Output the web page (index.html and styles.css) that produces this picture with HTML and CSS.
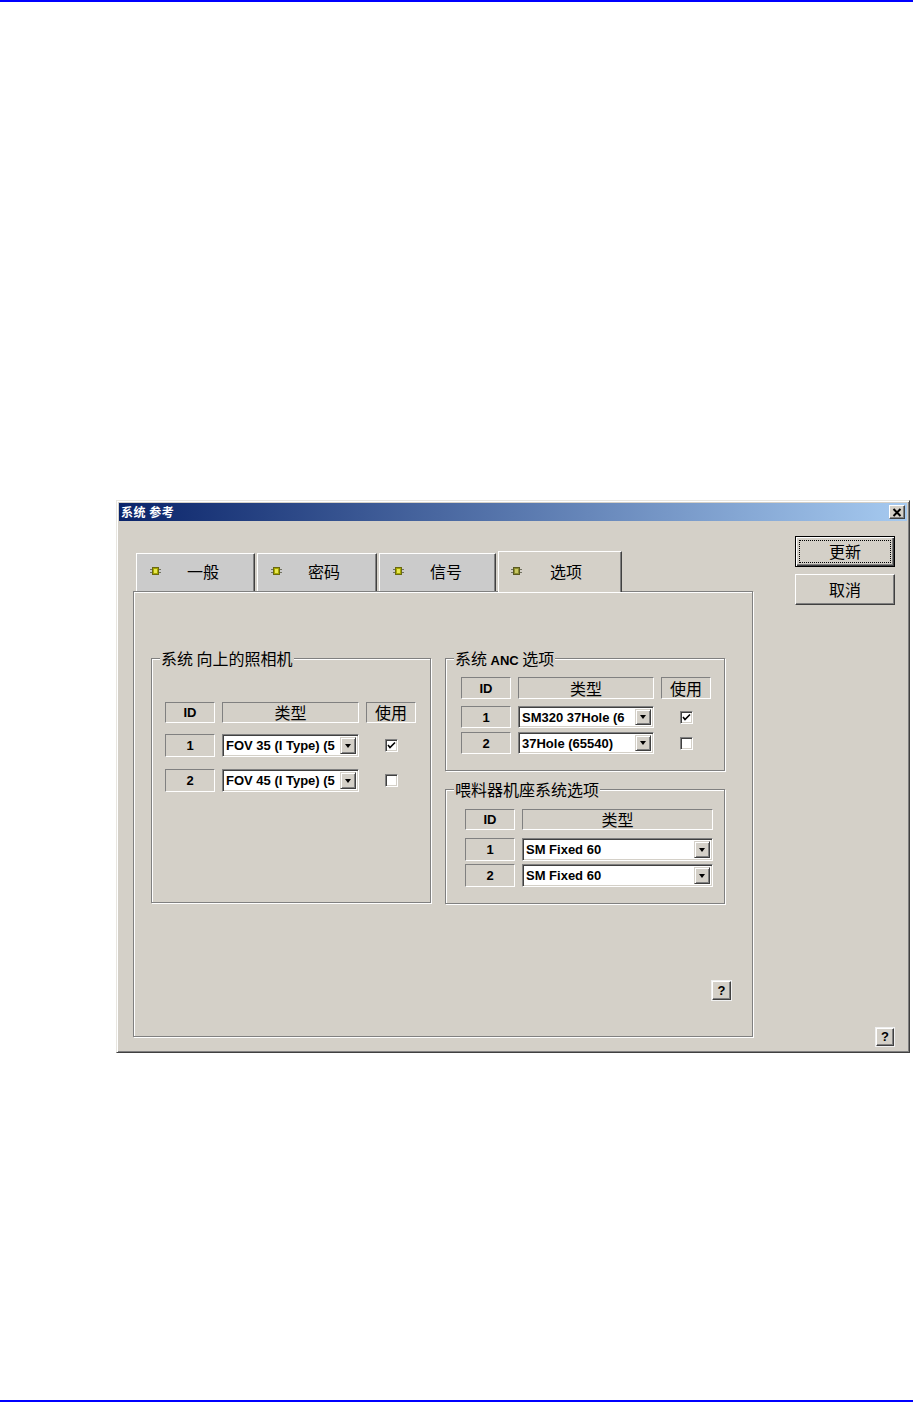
FILE: index.html
```html
<!DOCTYPE html>
<html lang="zh-CN">
<head>
<meta charset="utf-8">
<title>系统 参考</title>
<link rel="stylesheet" href="styles.css">
</head>
<body>
<div class="page">
  <div class="rule"></div>
  <div class="dialog">
    <div class="titlebar">
      <span class="title">系统 参考</span>
      <span class="close"><svg width="10" height="9" viewBox="0 0 10 9"><path d="M1.5 1 L8.5 8 M8.5 1 L1.5 8" stroke="#000" stroke-width="2" fill="none"/></svg></span>
    </div>
    <div class="dlg-body">
      <div class="main">
        <div class="tabs">
          <div class="tab t1"><svg class="chip" width="11" height="10" viewBox="0 0 11 10"><path d="M0 3.5h11M0 6.5h11" stroke="#707060" stroke-width="1.2"/><rect x="2.5" y="1.5" width="6" height="7" fill="#a8a800" stroke="#6a6a10"/><rect x="4" y="3" width="3" height="4" fill="#e8e850"/></svg><span class="tab-label">一般</span></div>
          <div class="tab t2"><svg class="chip" width="11" height="10" viewBox="0 0 11 10"><path d="M0 3.5h11M0 6.5h11" stroke="#707060" stroke-width="1.2"/><rect x="2.5" y="1.5" width="6" height="7" fill="#a8a800" stroke="#6a6a10"/><rect x="4" y="3" width="3" height="4" fill="#e8e850"/></svg><span class="tab-label">密码</span></div>
          <div class="tab t3"><svg class="chip" width="11" height="10" viewBox="0 0 11 10"><path d="M0 3.5h11M0 6.5h11" stroke="#707060" stroke-width="1.2"/><rect x="2.5" y="1.5" width="6" height="7" fill="#a8a800" stroke="#6a6a10"/><rect x="4" y="3" width="3" height="4" fill="#e8e850"/></svg><span class="tab-label">信号</span></div>
          <div class="tab t4 active"><svg class="chip" width="11" height="10" viewBox="0 0 11 10"><path d="M0 3.5h11M0 6.5h11" stroke="#707060" stroke-width="1.2"/><rect x="2.5" y="1.5" width="6" height="7" fill="#8c8c30" stroke="#5a5a20"/><rect x="4" y="3" width="3" height="4" fill="#c8c860"/></svg><span class="tab-label">选项</span></div>
        </div>
        <div class="panel">
          <div class="groups">
            <fieldset class="group g-cam">
              <legend>系统 向上的照相机</legend>
              <div class="tbl t-cam">
                <div class="row head">
                  <div class="cell id">ID</div>
                  <div class="cell type">类型</div>
                  <div class="cell use">使用</div>
                </div>
                <div class="row">
                  <div class="cell id">1</div>
                  <div class="combo type"><span class="val">FOV 35 (I Type) (5</span><span class="drop"><span class="arrow"></span></span></div>
                  <div class="chkcell use"><span class="chk"><svg width="9" height="9" viewBox="0 0 9 9"><path d="M1 4 L3 6.5 L8 1.5" stroke="#000" stroke-width="1.6" fill="none"/></svg></span></div>
                </div>
                <div class="row">
                  <div class="cell id">2</div>
                  <div class="combo type"><span class="val">FOV 45 (I Type) (5</span><span class="drop"><span class="arrow"></span></span></div>
                  <div class="chkcell use"><span class="chk"></span></div>
                </div>
              </div>
            </fieldset>
            <div class="col">
              <fieldset class="group g-anc">
                <legend>系统 <b>ANC</b> 选项</legend>
                <div class="tbl t-anc">
                  <div class="row head">
                    <div class="cell id">ID</div>
                    <div class="cell type">类型</div>
                    <div class="cell use">使用</div>
                  </div>
                  <div class="row">
                    <div class="cell id">1</div>
                    <div class="combo type"><span class="val">SM320 37Hole (6</span><span class="drop"><span class="arrow"></span></span></div>
                    <div class="chkcell use"><span class="chk"><svg width="9" height="9" viewBox="0 0 9 9"><path d="M1 4 L3 6.5 L8 1.5" stroke="#000" stroke-width="1.6" fill="none"/></svg></span></div>
                  </div>
                  <div class="row">
                    <div class="cell id">2</div>
                    <div class="combo type"><span class="val">37Hole (65540)</span><span class="drop"><span class="arrow"></span></span></div>
                    <div class="chkcell use"><span class="chk"></span></div>
                  </div>
                </div>
              </fieldset>
              <fieldset class="group g-feed">
                <legend>喂料器机座系统选项</legend>
                <div class="tbl t-feed">
                  <div class="row head">
                    <div class="cell id">ID</div>
                    <div class="cell type">类型</div>
                  </div>
                  <div class="row">
                    <div class="cell id">1</div>
                    <div class="combo type"><span class="val">SM Fixed 60</span><span class="drop"><span class="arrow"></span></span></div>
                  </div>
                  <div class="row">
                    <div class="cell id">2</div>
                    <div class="combo type"><span class="val">SM Fixed 60</span><span class="drop"><span class="arrow"></span></span></div>
                  </div>
                </div>
              </fieldset>
            </div>
          </div>
          <button class="help panel-help">?</button>
        </div>
      </div>
      <div class="side">
        <button class="btn default"><span class="focus">更新</span></button>
        <button class="btn">取消</button>
        <button class="help side-help">?</button>
      </div>
    </div>
  </div>
  <div class="rule bottom"></div>
</div>
</body>
</html>
```

FILE: styles.css
```css
html, body {
  margin: 0;
  padding: 0;
  background: #ffffff;
}

.page {
  width: 913px;
  height: 1402px;
  display: flex;
  flex-direction: column;
  font-family: "Noto Sans CJK SC", "Liberation Sans", sans-serif;
  color: #000;
}

.rule {
  height: 2px;
  background: #0000ff;
  flex: none;
}

.rule.bottom {
  margin-top: auto;
}

.dialog {
  box-sizing: border-box;
  width: 794px;
  height: 553px;
  margin: 498px 0 0 116px;
  background: #d4d0c8;
  border: 1px solid;
  border-color: #e8e6e0 #404040 #404040 #e8e6e0;
  box-shadow: inset 1px 1px #ffffff, inset -1px -1px #808080;
  padding: 2px;
  display: flex;
  flex-direction: column;
}

.titlebar {
  height: 18px;
  flex: none;
  background: linear-gradient(to right, #0a246a, #a6caf0);
  display: flex;
  align-items: center;
  justify-content: space-between;
  padding: 0 2px 0 2px;
}

.title {
  color: #ffffff;
  font-weight: bold;
  font-size: 12px;
  line-height: 14px;
  letter-spacing: 0.5px;
}

.close {
  box-sizing: border-box;
  width: 16px;
  height: 14px;
  background: #d4d0c8;
  border: 1px solid;
  border-color: #ffffff #404040 #404040 #ffffff;
  box-shadow: inset -1px -1px #808080;
  display: flex;
  align-items: center;
  justify-content: center;
}

.dlg-body {
  flex: 1;
  display: flex;
}

.main {
  width: 634px;
  flex: none;
  padding: 30px 0 0 14px;
  box-sizing: border-box;
  display: flex;
  flex-direction: column;
}

/* Tabs */
.tabs {
  height: 40px;
  display: flex;
  align-items: flex-end;
  gap: 2px;
  padding-left: 3px;
}

.tab {
  box-sizing: border-box;
  height: 38px;
  background: #cbcbcb;
  border-top: 1px solid #ffffff;
  border-left: 1px solid #ffffff;
  border-right: 1px solid #404040;
  box-shadow: inset -1px 0 #808080;
  display: flex;
  align-items: center;
  padding-left: 13px;
  padding-bottom: 3px;
  font-size: 16px;
}

.t1 { width: 119px; }
.t2 { width: 120px; }
.t3 { width: 117px; }
.t4 { width: 124px; }

.tab.active {
  height: 41px;
  margin-bottom: -1px;
  background: #d4d0c8;
  position: relative;
  z-index: 2;
  padding-left: 12px;
  padding-bottom: 2px;
}

.chip {
  flex: none;
}

.tab-label {
  margin-left: 26px;
  line-height: 17px;
}

.tab.active .tab-label {
  margin-left: 28px;
}

/* Panel */
.panel {
  box-sizing: border-box;
  width: 620px;
  height: 446px;
  border: 1px solid #808080;
  box-shadow: inset 1px 1px #ffffff, 1px 1px #ffffff;
  padding: 58px 0 0 17px;
  display: flex;
  flex-direction: column;
}

.groups {
  display: flex;
  gap: 14px;
}

.col {
  display: flex;
  flex-direction: column;
}

.group {
  box-sizing: border-box;
  width: 280px;
  margin: 0;
  padding: 0 0 0 8px;
  min-width: 0;
  border: 1px solid #808080;
  box-shadow: inset 1px 1px #ffffff, 1px 1px #ffffff;
}

.group legend {
  font-size: 16px;
  line-height: 16px;
  height: 16px;
  padding: 0 1px;
  margin-left: 0;
  background: #d4d0c8;
}

.group legend b {
  font-family: "Liberation Sans", sans-serif;
  font-weight: bold;
  font-size: 13px;
  line-height: 0;
}

.g-cam { height: 253px; }
.g-anc { height: 121px; }
.g-feed { height: 123px; margin-top: 10px; }

/* Tables */
.tbl {
  display: flex;
  flex-direction: column;
}

.row {
  display: flex;
  gap: 7px;
  align-items: stretch;
}

.cell {
  box-sizing: border-box;
  border: 1px solid;
  border-color: #808080 #ffffff #ffffff #808080;
  display: flex;
  align-items: center;
  justify-content: center;
}

.cell.id {
  width: 50px;
  font-family: "Liberation Sans", sans-serif;
  font-weight: bold;
  font-size: 13px;
}

.head .cell.type,
.head .cell.use {
  font-size: 16px;
  line-height: 17px;
}

.use { width: 50px; }

.t-cam { margin: 36px 0 0 5px; gap: 11px; }
.t-cam .row { height: 23px; }
.t-cam .row.head { height: 21px; }
.t-cam .type { width: 137px; }
.t-cam .row:last-child { margin-top: 1px; }

.t-anc { margin: 11px 0 0 7px; gap: 4px; }
.t-anc .row { height: 22px; }
.t-anc .row.head { margin-bottom: 3px; }
.t-anc .type { width: 136px; }

.t-feed { margin: 12px 0 0 11px; gap: 3px; }
.t-feed .row { height: 23px; }
.t-feed .row.head { height: 21px; margin-bottom: 5px; }
.t-feed .type { width: 191px; }

/* Combo box */
.combo {
  box-sizing: border-box;
  background: #ffffff;
  border: 1px solid;
  border-color: #808080 #ffffff #ffffff #808080;
  box-shadow: inset 1px 1px #404040, inset -1px -1px #d4d0c8;
  padding: 2px 2px 2px 2px;
  display: flex;
  align-items: center;
  overflow: hidden;
}

.combo .val {
  flex: 1;
  min-width: 0;
  overflow: hidden;
  white-space: nowrap;
  font-family: "Liberation Sans", sans-serif;
  font-weight: bold;
  font-size: 13px;
  line-height: 15px;
  padding-left: 1px;
}

.drop {
  box-sizing: border-box;
  width: 16px;
  align-self: stretch;
  flex: none;
  background: #d4d0c8;
  border: 1px solid;
  border-color: #d4d0c8 #404040 #404040 #d4d0c8;
  box-shadow: inset 1px 1px #ffffff, inset -1px -1px #808080;
  display: flex;
  align-items: center;
  justify-content: center;
}

.arrow {
  width: 0;
  height: 0;
  border-left: 3.5px solid transparent;
  border-right: 3.5px solid transparent;
  border-top: 4px solid #000;
}

/* Checkbox */
.chkcell {
  display: flex;
  align-items: center;
  justify-content: center;
}

.chk {
  box-sizing: border-box;
  width: 13px;
  height: 13px;
  background: #ffffff;
  border: 1px solid;
  border-color: #808080 #ffffff #ffffff #808080;
  box-shadow: inset 1px 1px #404040, inset -1px -1px #d4d0c8;
  display: flex;
  align-items: center;
  justify-content: center;
}

/* Buttons */
.help {
  box-sizing: border-box;
  padding: 0;
  background: #d4d0c8;
  border: 1px solid;
  border-color: #ffffff #404040 #404040 #ffffff;
  box-shadow: inset -1px -1px #808080, 0 0 0 1px #f0f0f0;
  font-family: "Liberation Sans", sans-serif;
  font-weight: bold;
  font-size: 13px;
  line-height: 14px;
  color: #000;
  display: flex;
  align-items: center;
  justify-content: center;
}

.panel-help {
  width: 19px;
  height: 19px;
  margin-top: auto;
  align-self: flex-end;
  margin-right: 21px;
  margin-bottom: 36px;
}

.side {
  flex: 1;
  margin-left: 42px;
  padding-top: 15px;
  display: flex;
  flex-direction: column;
}

.btn {
  box-sizing: border-box;
  width: 100px;
  height: 31px;
  padding: 0 0 2px 0;
  background: #d4d0c8;
  border: 1px solid;
  border-color: #ffffff #404040 #404040 #ffffff;
  box-shadow: inset -1px -1px #808080;
  font-family: "Noto Sans CJK SC", sans-serif;
  font-size: 16px;
  color: #000;
  display: flex;
  align-items: center;
  justify-content: center;
}

.btn + .btn {
  margin-top: 7px;
}

.btn.default {
  border-color: #000000;
  box-shadow: inset 1px 1px #ffffff, inset -1px -1px #404040, inset -2px -2px #808080;
  padding: 3px;
}

.btn .focus {
  box-sizing: border-box;
  width: 100%;
  height: 100%;
  border: 1px dotted #000;
  padding-bottom: 2px;
  display: flex;
  align-items: center;
  justify-content: center;
}

.side-help {
  width: 18px;
  height: 18px;
  margin-top: auto;
  align-self: flex-end;
  margin-right: 13px;
  margin-bottom: 4px;
}
```
